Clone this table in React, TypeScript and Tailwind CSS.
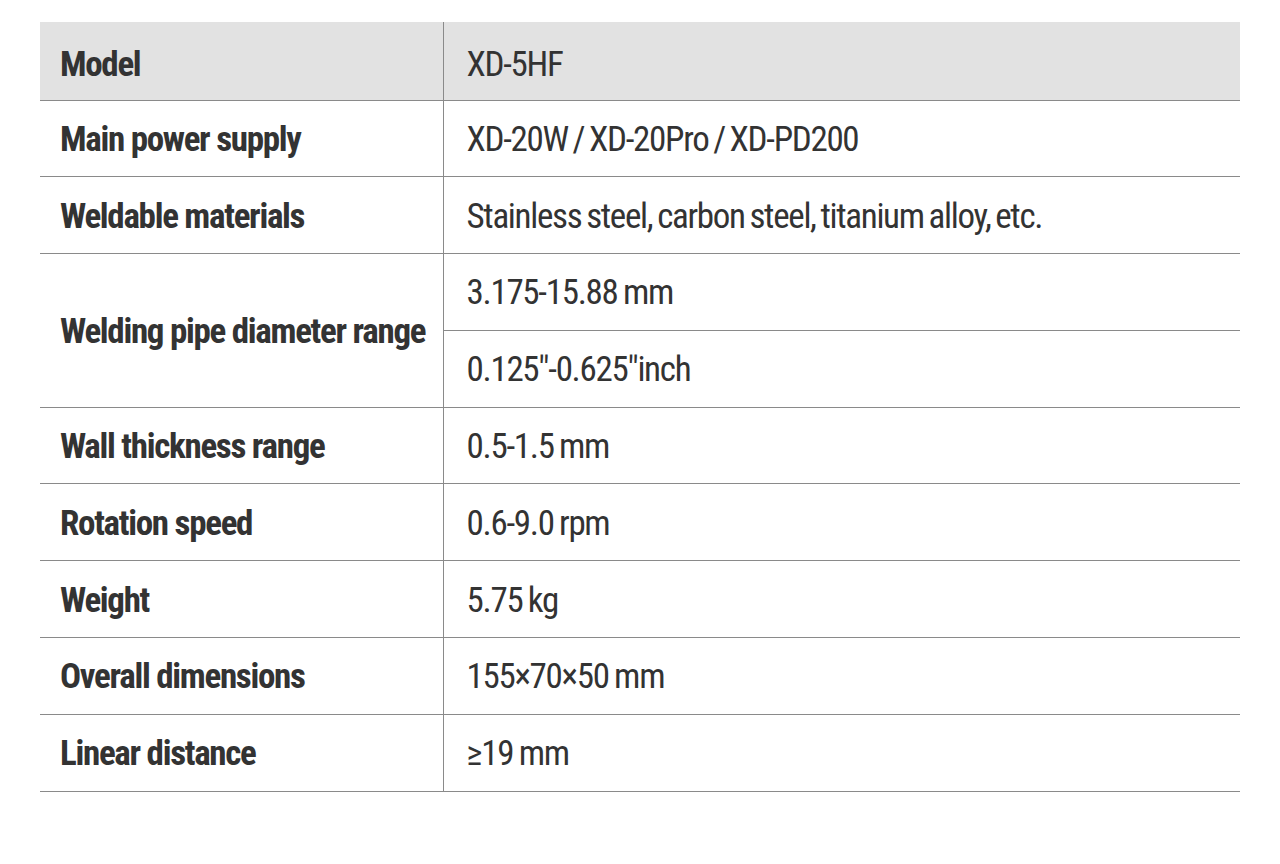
const rows: { label: string; values: string[] }[] = [
  { label: 'Main power supply', values: ['XD-20W / XD-20Pro / XD-PD200'] },
  { label: 'Weldable materials', values: ['Stainless steel, carbon steel, titanium alloy, etc.'] },
  { label: 'Welding pipe diameter range', values: ['3.175-15.88\u2009mm', '0.125"-0.625"inch'] },
  { label: 'Wall thickness range', values: ['0.5-1.5\u2009mm'] },
  { label: 'Rotation speed', values: ['0.6-9.0\u2009rpm'] },
  { label: 'Weight', values: ['5.75\u2009kg'] },
  { label: 'Overall dimensions', values: ['155×70×50\u2009mm'] },
  { label: 'Linear distance', values: ['≥19\u2009mm'] },
];

const font = { fontFamily: 'Roboto, "Liberation Sans", Arial, sans-serif' };

export default function App() {
  return (
    <div className="min-h-[864px] w-full bg-white pt-[22px] px-10" style={font}>
      <table className="w-[1200px] border-collapse text-[35px] leading-none text-[#333] font-stretch-[78%]">
        <colgroup>
          <col className="w-[403px]" />
          <col />
        </colgroup>
        <tbody>
          <tr className="h-[78px] bg-[#e2e2e2] border-b border-[#8a8a8a]">
            <td className="border-r border-[#8a8a8a] pl-5 pt-[8px] font-bold tracking-[-1.3px]">Model</td>
            <td className="pl-[23px] pt-[8px] tracking-[-1.3px] [word-spacing:-2px]">XD-5HF</td>
          </tr>
          {rows.map((row) =>
            row.values.map((v, i) => (
              <tr key={row.label + i} className="h-[76.8px] border-b border-[#8a8a8a]">
                {i === 0 && (
                  <td
                    rowSpan={row.values.length}
                    className="border-r border-[#8a8a8a] pl-5 pt-[2px] font-bold tracking-[-1.3px]"
                  >
                    {row.label}
                  </td>
                )}
                <td className="pl-[23px] pt-[2px] tracking-[-1.3px] [word-spacing:-2px]">{v}</td>
              </tr>
            ))
          )}
        </tbody>
      </table>
    </div>
  );
}
